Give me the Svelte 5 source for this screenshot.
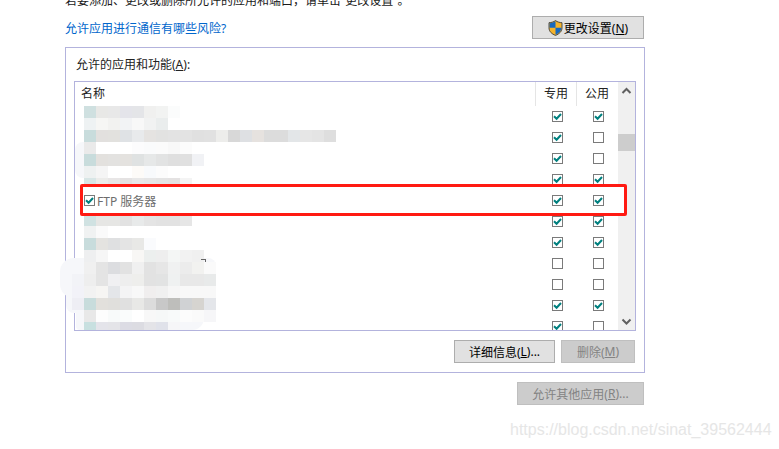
<script>
  // [专用, 公用] per row, the FTP row has its own name cell
  const rows = [
    { a: true, b: true },
    { a: true, b: false },
    { a: true, b: false },
    { a: true, b: true },
    { a: true, b: true, name: "FTP 服务器" },
    { a: true, b: true },
    { a: true, b: true },
    { a: false, b: false },
    { a: false, b: false },
    { a: true, b: true },
    { a: true, b: false },
  ];

  // blurred-out names: each band starts at x, y and has one 12px cell per colour
  const mosaic = [
    { x: 84, y: 106, h: 12, c: "cfe0e0 e8e8e6 e8e8e8 e4e4ea e4e5e8 f0f0ef f2f3f2 fbfcfc" },
    { x: 84, y: 118, h: 12, c: "eef2f3 f6f6f4 f2f2f0 f2f3f5 f8f8f8 f1f2f2 eaeded" },
    { x: 84, y: 130, h: 12, c: "c8dcdc e2e0de e2e1de dfe2e5 e8eaec e5e3e1 e2e2e1 e3e3e3 e3e3e3 e0e0e0 e1e1e1 ededeb d8d8d8 dee0e3 e6e2df dcdcdc dcdcdc e3e6e8 e6e6e6 e4e4e4 dedede" },
    { x: 84, y: 142, h: 12, c: "eaeaea ffffff ffffff ffffff fcfcfd fafbfc fbfbfb f8f8f8 fcfcfc" },
    { x: 84, y: 154, h: 12, c: "c8dcdc e3e1de e3e2e0 e4e2df dfe2e2 e6e8e8 e2e3e3 dfdfdf e0e0e0 f1f2f5" },
    { x: 84, y: 166, h: 12, c: "eef1f1 f5f5f5 ffffff ffffff fdfbf8 f8fafc fcfcfc" },
    { x: 84, y: 178, h: 12, c: "d8e6e6 ececea e8e6e6 e4e2e2 e8e8e8 e6e6e6 e4e4e4 e4e2e2 f4f4f4" },
    { x: 84, y: 214, h: 12, c: "d0e2e2 e6e6e4 e6e6e4 e2e2e2 e8eaea e4e4e4 e2e2e2 e2e2e2 e6e6e6" },
    { x: 84, y: 226, h: 12, c: "f0f2f2 fafafa" },
    { x: 84, y: 238, h: 12, c: "c8dcdc e4e3e0 dfe0e1 e4e4e4 e8e8e6 fafbfd" },
    { x: 84, y: 250, h: 12, c: "eeeff0 f6f6f6 ffffff ffffff f8f7f5 ecefee eeeeee f4f6f5 f2f2f2 f0f0f0" },
    { x: 84, y: 262, h: 12, c: "f0f0f0 e4e4e4 dcdde0 e2e2e2 f0f0f0 e2e2e2 e6e6e6 f0f1f1 ececec f2f2f0 fafafa" },
    { x: 72, y: 274, h: 12, c: "f2f3f7 eeeeee e4e4e4 f0f0f2 eeeeee eeeeec e2e2e2 e2e3e3 eff1f1 e8e8e8 e8e8e8 e8eaea" },
    { x: 72, y: 286, h: 12, c: "f2f2f8 f2f2f2 f6f5f3 e4e6e9 f4f4f5 f8f8f8 f0eeee f0f0f0 f6f6f6 f8f8f8 f8f8f8 f8f8f8" },
    { x: 72, y: 298, h: 12, c: "eeeef4 c8dcdc e2e0dc e0dfdc e0e0e0 e8e8e6 dcdcdc c8c8c8 bebebb d0d2d4 d6d4d0 e4e6ea" },
    { x: 84, y: 310, h: 12, c: "e8e8e8 fdfdfd f8fafa fafcfc ffffff f8f8f8 f6f8f8 f8fafa fcfcfc fafafa f6f6f8" },
    { x: 84, y: 322, h: 8, c: "c8e0e0 e4e4ea e4e4e8 dcdce4 dcdce2 e4e4e8 e0e2ea f6f6f8" },
  ];
</script>

{#snippet check(on)}
  <span class="box">
    {#if on}
      <svg width="9" height="9" viewBox="0 0 9 9"><path d="M1 4.2 3.6 6.8 8 2" fill="none" stroke="#00807f" stroke-width="2" /></svg>
    {/if}
  </span>
{/snippet}

<div class="page">
  <p class="note">若要添加、更改或删除所允许的应用和端口，请单击“更改设置”。</p>

  <div class="top">
    <span class="link">允许应用进行通信有哪些风险?</span>
    <button class="btn settings">
      <svg width="15" height="16" viewBox="0 0 15 16">
        <path d="M7.5.6C5.5 2 3.4 2.6 1 2.7v5.2c0 3.4 2.6 6 6.5 7.5 3.9-1.500 6.500-4.100 6.500-7.500V2.700C11.600 2.600 9.500 2 7.500.6Z" fill="#f5b32a" stroke="#3c3c3c" stroke-width=".9" />
        <path d="M7.500 1.300C5.700 2.500 3.800 3.100 1.600 3.200v4.600h5.900ZM7.500 7.800v7c3.300-1.400 5.900-3.800 5.900-7Z" fill="#1668c0" />
      </svg>
      <span>更改设置(<u>N</u>)</span>
    </button>
  </div>

  <div class="panel">
    <div class="label">允许的应用和功能(<u>A</u>):</div>

    <div class="list">
      <div class="table">
        <div class="head">
          <span class="head-name">名称</span>
          <span class="head-col">专用</span>
          <span class="head-col">公用</span>
        </div>
        {#each rows as row}
          <div class="row" class:marked={row.name}>
            <div class="name">
              {#if row.name}
                {@render check(true)}
                <span>{row.name}</span>
              {/if}
            </div>
            <div class="cell">{@render check(row.a)}</div>
            <div class="cell">{@render check(row.b)}</div>
          </div>
        {/each}
      </div>

      <div class="scroll">
        <svg class="arrow" width="17" height="18" viewBox="0 0 17 18"><path d="M4.500 11 8.500 7l4 4" fill="none" stroke="#606060" stroke-width="2" /></svg>
        <div class="thumb"></div>
        <svg class="arrow down" width="17" height="17" viewBox="0 0 17 17"><path d="M4.500 6.500l4 4 4-4" fill="none" stroke="#606060" stroke-width="2" /></svg>
      </div>
    </div>

    <div class="actions">
      <button class="btn details">详细信息(<u>L</u>)...</button>
      <button class="btn off remove">删除(<u>M</u>)</button>
    </div>
  </div>

  <div class="bottom">
    <button class="btn off other">允许其他应用(<u>R</u>)...</button>
  </div>

  <div class="blob upper"></div>
  <div class="blob one"></div>
  <div class="blob two"></div>
  <div class="blob three"></div>
  {#each mosaic as band}
    <div class="band" style="left: {band.x}px; top: {band.y}px; height: {band.h}px;">
      {#each band.c.split(" ") as colour}
        <span style="background: #{colour};"></span>
      {/each}
    </div>
  {/each}

  <div class="mark"></div>
  <div class="watermark">https://blog.csdn.net/sinat_39562444</div>
</div>

<style>
  :global(body) {
    background: #fff;
  }

  .page {
    position: relative;
    width: 779px;
    height: 449px;
    overflow: hidden;
    padding-left: 65px;
    box-sizing: border-box;
    font-family: "Noto Sans", "Noto Sans CJK SC", sans-serif;
    font-size: 12px;
    color: #000;
  }

  .note {
    margin: -7px 0 0;
    height: 15px;
    line-height: 16px;
    white-space: nowrap;
    color: #1a1a1a;
  }

  .top {
    width: 579px;
    margin-top: 8px;
    display: flex;
    justify-content: space-between;
    align-items: center;
  }

  .link {
    color: #0066cc;
  }

  .btn {
    height: 23px;
    padding: 0;
    box-sizing: border-box;
    background: #e1e1e1;
    border: 1px solid #adadad;
    border-radius: 0;
    font: inherit;
    color: #000;
    display: flex;
    align-items: center;
    justify-content: center;
  }

  .btn.off {
    background: #cccccc;
    border-color: #bfbfbf;
    color: #838383;
  }

  .settings {
    width: 112px;
    gap: 1px;
  }

  .panel {
    width: 580px;
    height: 326px;
    margin-top: 8px;
    box-sizing: border-box;
    border: 1px solid #b3b3dd;
    padding: 8px 8px 9px;
  }

  .label {
    height: 17px;
    line-height: 17px;
    padding-left: 2px;
    margin-bottom: 8px;
    color: #222;
  }

  .list {
    height: 250px;
    box-sizing: border-box;
    border: 1px solid #b3b3dd;
    display: flex;
    overflow: hidden;
  }

  .table {
    flex: 1;
  }

  .head {
    height: 24px;
    display: grid;
    grid-template-columns: 460px 41px 41px;
    align-items: stretch;
    line-height: 23px;
    color: #222;
  }

  .head-name {
    padding-left: 6px;
  }

  .head-col {
    text-align: center;
    border-left: 1px solid #e5e5e5;
  }

  .row {
    height: 21px;
    display: grid;
    grid-template-columns: 460px 41px 41px;
    align-items: center;
  }

  .row.marked {
    position: relative;
    z-index: 3;
  }

  .row.marked::before {
    content: "";
    position: absolute;
    z-index: -1;
    left: 5px;
    right: -9px;
    top: -6px;
    bottom: -5px;
    background: #fff;
    border: 3px solid #ff1a12;
    border-radius: 2px;
  }

  .name {
    display: flex;
    align-items: center;
    gap: 2px;
    padding-left: 9px;
    color: #6d6d6d;
  }

  .cell {
    display: flex;
    justify-content: center;
    padding-left: 3px;
  }

  .box {
    width: 11px;
    height: 11px;
    box-sizing: border-box;
    border: 1px solid #7a7a7a;
    background: #fff;
    display: block;
  }

  .box svg {
    display: block;
    margin-top: 0;
  }

  .scroll {
    width: 17px;
    background: #f0f0f0;
    display: flex;
    flex-direction: column;
  }

  .arrow {
    display: block;
    flex: none;
  }

  .arrow.down {
    margin-top: auto;
  }

  .thumb {
    height: 17px;
    margin-top: 34px;
    background: #cdcdcd;
  }

  .actions {
    margin-top: 9px;
    padding-right: 1px;
    display: flex;
    justify-content: flex-end;
    gap: 6px;
  }

  .details {
    width: 101px;
  }

  .remove {
    width: 74px;
  }

  .bottom {
    width: 579px;
    margin-top: 9px;
    display: flex;
    justify-content: flex-end;
  }

  .other {
    width: 127px;
  }

  /* the smudge someone painted over the app names */
  .blob {
    position: absolute;
    z-index: 2;
    background: #f6f7fa;
  }

  .blob.upper {
    left: 75px;
    top: 142px;
    width: 12px;
    height: 36px;
    border-radius: 8px 0 0 8px;
  }

  .blob.one {
    left: 60px;
    top: 258px;
    width: 156px;
    height: 40px;
    border-radius: 14px 8px 8px 14px;
  }

  .blob.two {
    left: 66px;
    top: 290px;
    width: 148px;
    height: 23px;
    border-radius: 4px 10px 4px 8px;
  }

  .blob.three {
    left: 76px;
    top: 305px;
    width: 128px;
    height: 25px;
    border-radius: 4px 0 12px 4px;
  }

  .band {
    position: absolute;
    z-index: 2;
    display: flex;
  }

  .band span {
    width: 12px;
    height: 100%;
  }

  .mark {
    position: absolute;
    z-index: 2;
    left: 201px;
    top: 259px;
    width: 4px;
    height: 2px;
    border-top: 1px solid #666;
    border-right: 1px solid #666;
  }

  .watermark {
    position: absolute;
    left: 510px;
    top: 421px;
    font-family: "Liberation Sans", sans-serif;
    font-size: 16px;
    line-height: 18px;
    color: #e6e6e6;
    white-space: nowrap;
  }
</style>
